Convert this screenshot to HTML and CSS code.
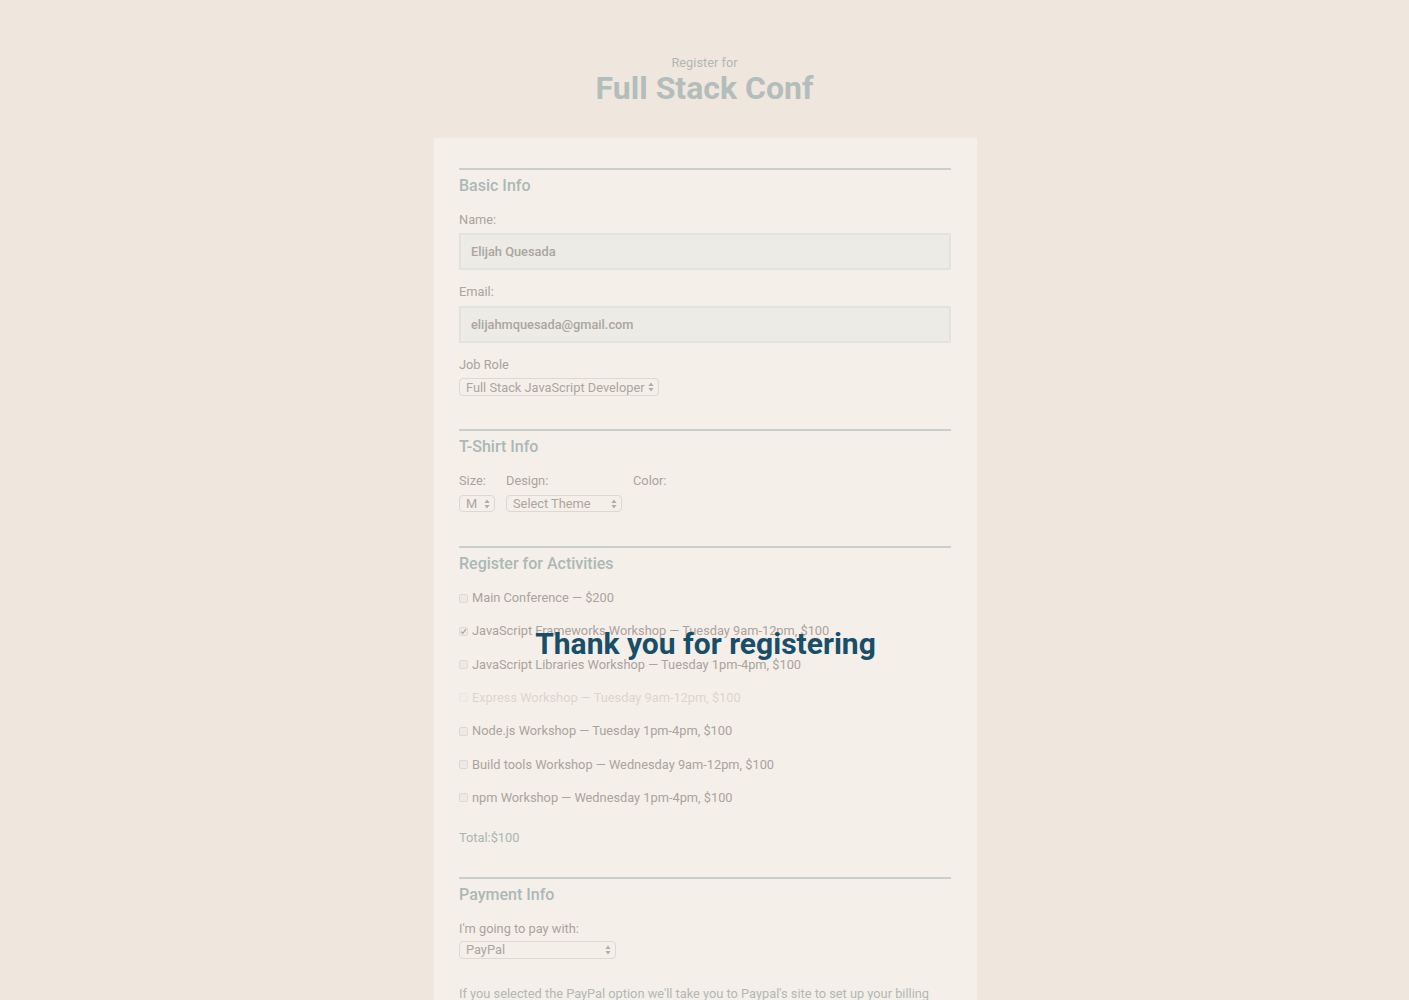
FILE: index.html
```html
<!DOCTYPE html>
<html lang="en">
<head>
<meta charset="utf-8">
<title>Full Stack Conf</title>
<link rel="stylesheet" href="styles.css">
</head>
<body>
<header class="page-header">
  <span class="pre-title">Register for</span>
  <h1 class="title">Full Stack Conf</h1>
</header>
<main class="card">
  <section class="group group-basic">
    <h2 class="group-title">Basic Info</h2>
    <label class="label label-name">Name:</label>
    <div class="text-input">Elijah Quesada</div>
    <label class="label label-gap">Email:</label>
    <div class="text-input">elijahmquesada@gmail.com</div>
    <label class="label label-gap label-role">Job Role</label>
    <div class="select select-role"><span>Full Stack JavaScript Developer</span><svg class="arrows" width="6" height="10" viewBox="0 0 6 10"><path d="M3 0.5L5.6 4H0.4Z M3 9.5L5.6 6H0.4Z" fill="#b2aca7"/></svg></div>
  </section>

  <section class="group group-shirt">
    <h2 class="group-title">T-Shirt Info</h2>
    <div class="shirt-row">
      <div class="shirt-col">
        <label class="label">Size:</label>
        <div class="select select-size"><span>M</span><svg class="arrows" width="6" height="10" viewBox="0 0 6 10"><path d="M3 0.5L5.6 4H0.4Z M3 9.5L5.6 6H0.4Z" fill="#b2aca7"/></svg></div>
      </div>
      <div class="shirt-col">
        <label class="label">Design:</label>
        <div class="select select-theme"><span>Select Theme</span><svg class="arrows" width="6" height="10" viewBox="0 0 6 10"><path d="M3 0.5L5.6 4H0.4Z M3 9.5L5.6 6H0.4Z" fill="#b2aca7"/></svg></div>
      </div>
      <div class="shirt-col">
        <label class="label">Color:</label>
      </div>
    </div>
  </section>

  <section class="group group-activities">
    <h2 class="group-title">Register for Activities</h2>
    <div class="activities">
      <div class="activity"><span class="box"></span>Main Conference — $200</div>
      <div class="activity"><span class="box"><svg width="7" height="7" viewBox="0 0 7 7"><path d="M1 3.6L2.8 5.4L6 1.2" fill="none" stroke="#a9a39e" stroke-width="1.2"/></svg></span>JavaScript Frameworks Workshop — Tuesday 9am-12pm, $100</div>
      <div class="activity"><span class="box"></span>JavaScript Libraries Workshop — Tuesday 1pm-4pm, $100</div>
      <div class="activity disabled"><span class="box"></span>Express Workshop — Tuesday 9am-12pm, $100</div>
      <div class="activity"><span class="box"></span>Node.js Workshop — Tuesday 1pm-4pm, $100</div>
      <div class="activity"><span class="box"></span>Build tools Workshop — Wednesday 9am-12pm, $100</div>
      <div class="activity"><span class="box"></span>npm Workshop — Wednesday 1pm-4pm, $100</div>
    </div>
    <p class="total">Total:$100</p>
  </section>

  <section class="group group-payment">
    <h2 class="group-title">Payment Info</h2>
    <label class="label label-pay">I'm going to pay with:</label>
    <div class="select select-pay"><span>PayPal</span><svg class="arrows" width="6" height="10" viewBox="0 0 6 10"><path d="M3 0.5L5.6 4H0.4Z M3 9.5L5.6 6H0.4Z" fill="#b2aca7"/></svg></div>
    <p class="pay-note">If you selected the PayPal option we'll take you to Paypal's site to set up your billing information, when you click "Register" below.</p>
  </section>

  <div class="thanks">Thank you for registering</div>
</main>
</body>
</html>
```

FILE: styles.css
```css
* { box-sizing: border-box; }

html, body {
  margin: 0;
  padding: 0;
  background: #efe7dd;
  font-family: Roboto, "Liberation Sans", sans-serif;
  height: 1000px;
  overflow: hidden;
}

.page-header {
  display: flex;
  flex-direction: column;
  align-items: center;
  padding-top: 55px;
}

.pre-title {
  font-size: 12.8px;
  line-height: 15px;
  color: #b1b7b6;
}

.title {
  margin: -1px 0 0;
  font-size: 32px;
  line-height: 38px;
  font-weight: 700;
  color: #b3bdbc;
}

.card {
  position: relative;
  width: 543px;
  margin: 31px 0 0 calc(50% - 270.5px);
  background: #f5efe9;
  padding: 30px 26px 40px 25px;
}

.group {
  border-top: 2px solid #c9cfcd;
  display: flex;
  flex-direction: column;
  align-items: flex-start;
}

.group-basic { margin-bottom: 33px; }
.group-shirt { margin-bottom: 34px; }
.group-payment { margin-top: 31px; }

.group-title {
  margin: 6px 0 16px;
  font-size: 16px;
  line-height: 20px;
  font-weight: 500;
  color: #acb8b7;
}

.label {
  display: block;
  font-size: 12.8px;
  line-height: 16px;
  color: #aaa39e;
  margin-bottom: 6px;
}

.label-name { margin-bottom: 5px; }
.label-gap { margin-top: 14px; }
.label-role { margin-top: 14px; margin-bottom: 5px; }
.label-pay { margin-bottom: 4px; }

.text-input {
  width: 100%;
  height: 37px;
  background: #edebe6;
  border: 2px solid #e3e3de;
  padding: 0 10px;
  display: flex;
  align-items: center;
  font-size: 12.8px;
  font-weight: 500;
  color: #aaa5a0;
}

.select {
  height: 18px;
  border: 1px solid #ddd8d3;
  border-radius: 4px;
  display: flex;
  align-items: center;
  justify-content: space-between;
  padding: 0 4px 0 6px;
  font-size: 12.8px;
  color: #aba5a0;
}

.select span { white-space: nowrap; }
.arrows { margin-left: 3px; flex: none; }

.select-role { width: 200px; }
.select-size { width: 36px; height: 17px; }
.select-theme { width: 116px; height: 17px; }
.select-pay { width: 157px; }

.shirt-row { display: flex; }

.shirt-col { display: flex; flex-direction: column; align-items: flex-start; }
.shirt-col:nth-child(1) { width: 47px; }
.shirt-col:nth-child(2) { width: 127px; }

.activities {
  display: flex;
  flex-direction: column;
  gap: 17.33px;
}

.activity {
  display: flex;
  align-items: center;
  font-size: 12.8px;
  line-height: 16px;
  color: #aaa39e;
}

.activity.disabled { color: #dbd5cf; }
.activity.disabled .box { border-color: #ebe7e3; background: #f1ede9; }

.box {
  width: 9px;
  height: 9px;
  border: 1px solid #ded9d5;
  border-radius: 2px;
  background: #ede9e5;
  margin-right: 4px;
  display: flex;
  align-items: center;
  justify-content: center;
}

.total {
  margin: 24px 0 0;
  font-size: 12.8px;
  line-height: 16px;
  color: #a9b5b3;
}

.pay-note {
  margin: 26px 0 0;
  font-size: 12.8px;
  line-height: 18px;
  color: #b1b8b7;
}

.thanks {
  position: absolute;
  left: 0;
  right: 0;
  top: 488px;
  text-align: center;
  font-size: 30px;
  line-height: 36px;
  font-weight: 700;
  color: #184e68;
}
```
